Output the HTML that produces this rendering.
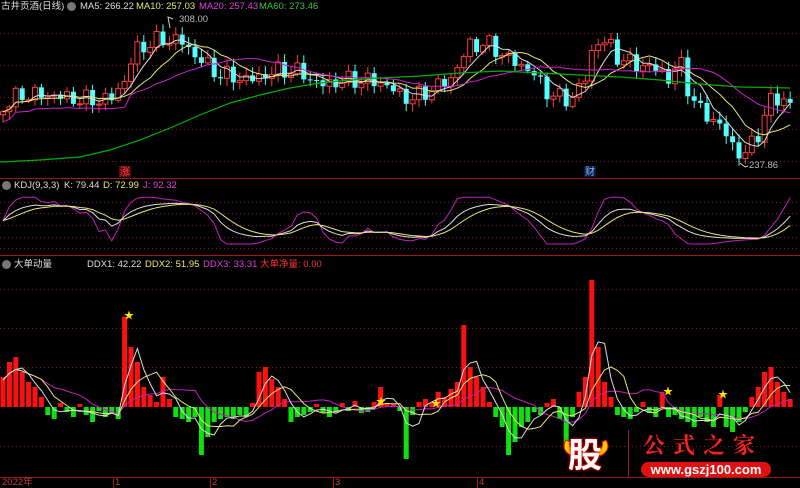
<!DOCTYPE html>
<html><head><meta charset="utf-8">
<style>
html,body{margin:0;padding:0;background:#000;width:800px;height:488px;overflow:hidden}
body{position:relative;font-family:"Liberation Sans","Noto Sans CJK SC",sans-serif;font-size:9.5px}
.t{position:absolute;white-space:nowrap;line-height:12px}
svg{position:absolute;left:0;top:0}
</style></head><body>
<svg id="s" width="800" height="488" xmlns="http://www.w3.org/2000/svg">
<g stroke="#8a1c1c" stroke-dasharray="1,3" stroke-width="1">
<line x1="0" y1="33.5" x2="800" y2="33.5"/><line x1="0" y1="65.5" x2="800" y2="65.5"/><line x1="0" y1="97.5" x2="800" y2="97.5"/><line x1="0" y1="129.5" x2="800" y2="129.5"/><line x1="0" y1="161.5" x2="800" y2="161.5"/>
<line x1="0" y1="202.5" x2="800" y2="202.5"/><line x1="0" y1="213.5" x2="800" y2="213.5"/><line x1="0" y1="225.5" x2="800" y2="225.5"/><line x1="0" y1="237.5" x2="800" y2="237.5"/><line x1="0" y1="248.5" x2="800" y2="248.5"/>
<line x1="0" y1="289.5" x2="800" y2="289.5"/><line x1="0" y1="328.5" x2="800" y2="328.5"/><line x1="0" y1="367.5" x2="800" y2="367.5"/><line x1="0" y1="446.5" x2="800" y2="446.5"/>
</g>
<g stroke="#a01818" stroke-width="1">
<line x1="0" y1="178.5" x2="800" y2="178.5"/><line x1="0" y1="255.5" x2="800" y2="255.5"/><line x1="0" y1="477.5" x2="800" y2="477.5"/>
<line x1="113.5" y1="478" x2="113.5" y2="488"/><line x1="210.5" y1="478" x2="210.5" y2="488"/><line x1="333.5" y1="478" x2="333.5" y2="488"/><line x1="477.5" y1="478" x2="477.5" y2="488"/>
</g>
<g id="g"></g>
<polyline fill="none" stroke="#00b000" stroke-width="1.2" points="0,162 40,160 80,157 110,150 140,140 170,128 200,115 230,103 260,95 290,88 320,83 350,80 380,78 420,76 460,73 500,71 540,73 580,75 620,77 660,80 700,84 740,87 790,88"/>
<rect x="119" y="166" width="12" height="11" fill="#5a0a0a"/>
<text x="120" y="175" fill="#ff4040" font-size="10" font-family="Noto Sans CJK SC">涨</text>
<rect x="584" y="166" width="12" height="11" fill="#0a1a40"/>
<text x="585" y="175" fill="#8ab4ff" font-size="10" font-family="Noto Sans CJK SC">财</text>
<polyline fill="none" stroke="#ccc" points="170,28 168,17 173,19"/>
<polyline fill="none" stroke="#ccc" points="740,163 745,167 748,166"/>
<path d="M566,440 Q560,450 572,456 L576,452 Q568,448 570,442Z M606,440 Q612,450 600,456 L596,452 Q604,448 602,442Z" fill="#ffcc00" stroke="#f00"/>
</svg>
<div class="t" style="left:1px;top:1px;color:#ddd">古井贡酒(日线)</div>
<div class="t" style="left:67px;top:2px;width:9px;height:9px;border-radius:5px;background:#777"></div>
<div class="t" style="left:80px;top:1px;color:#ddd">MA5: 266.22</div>
<div class="t" style="left:136px;top:1px;color:#e6e67a">MA10: 257.03</div>
<div class="t" style="left:199px;top:1px;color:#e040e0">MA20: 257.43</div>
<div class="t" style="left:259px;top:1px;color:#40c040">MA60: 273.46</div>
<div class="t" style="left:179px;top:14px;color:#bbb">308.00</div>
<div class="t" style="left:749px;top:160px;color:#bbb">237.86</div>
<div class="t" style="left:2px;top:181px;width:9px;height:9px;border-radius:5px;background:#777"></div>
<div class="t" style="left:14px;top:180px;color:#ddd">KDJ(9,3,3)</div>
<div class="t" style="left:64px;top:180px;color:#ddd">K: 79.44</div>
<div class="t" style="left:103px;top:180px;color:#e6e67a">D: 72.99</div>
<div class="t" style="left:143px;top:180px;color:#e040e0">J: 92.32</div>
<div class="t" style="left:2px;top:260px;width:9px;height:9px;border-radius:5px;background:#777"></div>
<div class="t" style="left:14px;top:259px;color:#ddd">大单动量</div>
<div class="t" style="left:87px;top:259px;color:#ddd">DDX1: 42.22</div>
<div class="t" style="left:145px;top:259px;color:#e6e67a">DDX2: 51.95</div>
<div class="t" style="left:203px;top:259px;color:#e040e0">DDX3: 33.31</div>
<div class="t" style="left:260px;top:259px;color:#ff3030">大单净量: 0.00</div>
<div class="t" style="left:2px;top:477px;color:#c04040">2022年</div>
<div class="t" style="left:115px;top:477px;color:#c04040">1</div>
<div class="t" style="left:212px;top:477px;color:#c04040">2</div>
<div class="t" style="left:335px;top:477px;color:#c04040">3</div>
<div class="t" style="left:479px;top:477px;color:#c04040">4</div>
<div class="t" style="left:568px;top:433px;font-size:34px;line-height:40px;font-weight:bold;color:#fff;font-family:'Noto Sans CJK SC',sans-serif;text-shadow:0 0 3px #f00,0 0 2px #f00">股</div>
<div class="t" style="left:628px;top:430px;width:1px;height:48px;background:#a01818"></div>
<div class="t" style="left:643px;top:432px;font-size:22px;line-height:26px;color:#ff2020;letter-spacing:8px;font-weight:bold;font-family:'Noto Serif CJK SC',serif">公式之家</div>
<div class="t" style="left:641px;top:462px;width:130px;height:15px;border-radius:8px;background:#e01010;color:#fff;font-weight:bold;font-size:13px;line-height:15px;text-align:center">www.gszj100.com</div>
<script>
var NS="http://www.w3.org/2000/svg",G=document.getElementById("g");
function el(t,a){var e=document.createElementNS(NS,t);for(var k in a)e.setAttribute(k,a[k]);G.appendChild(e);return e}
var kp=[[0,110],[20,95],[50,95],[80,100],[110,100],[125,80],[135,50],[160,40],[180,40],[200,60],[220,75],[250,80],[280,70],[300,72],[320,85],[350,80],[380,82],[410,100],[430,90],[450,80],[470,45],[490,45],[510,60],[530,70],[550,95],[570,100],[585,80],[595,40],[610,45],[620,60],[640,65],[660,70],[670,80],[680,60],[690,95],[700,110],[720,125],[735,150],[745,155],[760,130],[770,100],[785,100],[795,105]];
function ip(x){for(var i=1;i<kp.length;i++)if(x<=kp[i][0]){var a=kp[i-1],b=kp[i];return a[1]+(b[1]-a[1])*(x-a[0])/(b[0]-a[0])}return 105}
var P=6.4,N=124,C=[],X=[];
for(var i=0;i<N;i++){var x=3+i*P;X.push(x);C.push(ip(x)+Math.sin(i*2.3)*6+Math.cos(i*1.7)*4)}
function ma(a,n){return a.map(function(v,i){var s=0,c=0;for(var j=Math.max(0,i-n+1);j<=i;j++){s+=a[j];c++}return s/c})}
function line(xs,ys,col){el("polyline",{points:xs.map(function(x,i){return x.toFixed(1)+","+ys[i].toFixed(1)}).join(" "),fill:"none",stroke:col,"stroke-width":1})}
for(var i=0;i<N;i++){var o=i?C[i-1]:C[0]+3,c=C[i],hi=Math.min(o,c)-2-Math.abs(Math.sin(i*3.1))*6,lo=Math.max(o,c)+2+Math.abs(Math.cos(i*2.7))*6;var up=c<o,col=up?"#ff3c3c":"#54ffff",x=X[i];
el("line",{x1:x,y1:hi,x2:x,y2:lo,stroke:col});
var t=Math.min(o,c),h=Math.max(1,Math.abs(o-c));
if(up)el("rect",{x:x-2.5,y:t,width:5,height:h,fill:"#000",stroke:col});else el("rect",{x:x-2.5,y:t,width:5,height:h,fill:col});}
line(X,ma(C,5),"#ddd");line(X,ma(C,10),"#e6e67a");line(X,ma(C,20).map(function(v,i){return v+(i<20?10:0)}),"#d020d0");
var S=ma(C,4),K=[],D=[],J=[],k=50,d=50;
for(var i=0;i<N;i++){var mn=1e9,mx=-1e9;for(var j=Math.max(0,i-13);j<=i;j++){mn=Math.min(mn,S[j]);mx=Math.max(mx,S[j])}var r=mx>mn?(mx-S[i])/(mx-mn)*100:50;k=k*2/3+r/3;d=d*2/3+k/3;K.push(k);D.push(d);J.push(3*k-2*d)}
function ky(v){return 244-(Math.max(-15,Math.min(115,v))+15)*0.36}
line(X,J.map(ky),"#c020c0");line(X,K.map(ky),"#ddd");line(X,D.map(ky),"#e6e67a");
var B=[30,45,50,35,25,20,10,-8,-12,4,-5,-10,3,-8,-15,-4,-10,-6,-12,90,60,45,20,12,5,30,8,-10,-12,-15,-10,-48,-30,-15,-12,-10,-12,-8,-10,4,35,40,28,20,8,-15,-10,-8,-5,3,-6,-10,-5,4,-4,6,-6,-5,5,20,4,3,-4,-52,-8,5,8,4,15,10,18,25,82,40,30,20,5,-10,-20,-48,-35,-20,-15,-5,-8,4,8,-12,-40,-10,15,30,127,60,25,10,-8,-10,-12,-5,5,-6,-10,15,-10,-8,-12,-15,-20,-10,-15,-20,12,-20,-25,-15,-5,10,20,35,40,25,15,8];
var Z=407;
for(var i=0;i<N;i++){var v=B[i]||2;el("rect",{x:X[i]-2.5,y:v>0?Z-v:Z,width:5,height:Math.abs(v),fill:v>0?"#ff1010":"#10e010"})}
var s1=ma(B,3),s2=ma(B,6),s3=ma(B,12);
function dy(a,f){return a.map(function(v){return Z-v*f})}
line(X,dy(s3,0.9),"#c020c0");line(X,dy(s2,0.9),"#e6e67a");line(X,dy(s1,0.9),"#ddd");
[[128,315],[380,401],[435,403],[667,391],[722,394]].forEach(function(p){el("text",{x:p[0]-4,y:p[1]+4,fill:"#ffe000","font-size":"10"}).textContent="★"});
</script>
</body></html>
